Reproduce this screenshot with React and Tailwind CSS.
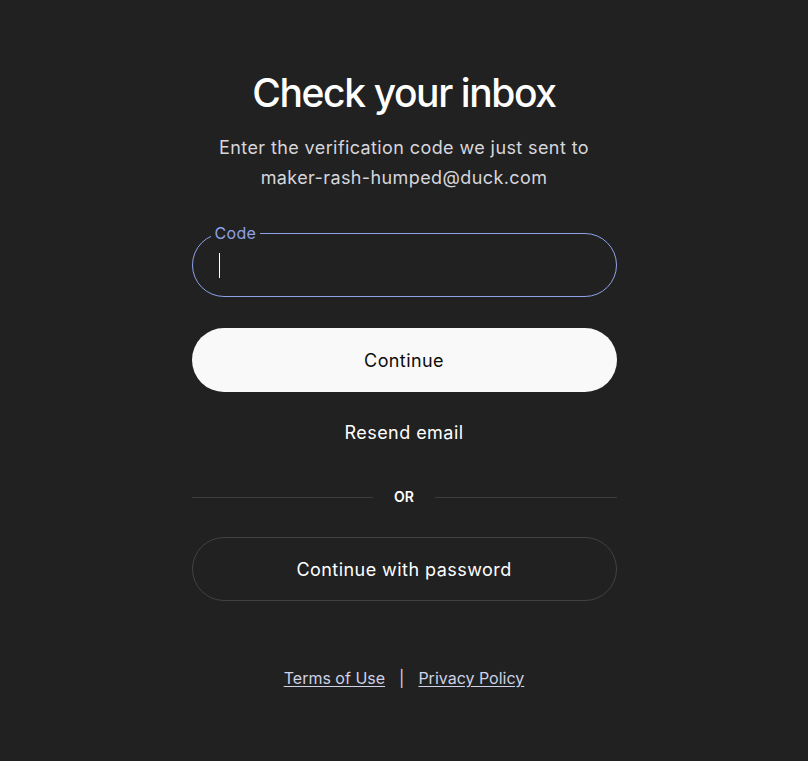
import React, { useState } from "react";

const CodeField = ({ value, onChange }) => (
  <div className="relative h-16 rounded-full border border-[#8ea2e8]">
    <span className="absolute -top-[11px] left-[18px] bg-[#212121] px-1 text-[16px] leading-5 tracking-[0.3px] text-[#8ea2e8]">
      Code
    </span>
    <div className="flex h-full items-center pl-[26px] pr-6">
      {/* caret while the field is empty */}
      {value === "" && <span className="h-[25px] w-px bg-white" />}
      <input
        value={value}
        onChange={(e) => onChange(e.target.value)}
        className="h-full w-full bg-transparent text-[18px] text-white outline-none"
      />
    </div>
  </div>
);

export default function App() {
  const [code, setCode] = useState("");

  return (
    <div
      className="min-h-[761px] bg-[#212121] text-white"
      style={{ fontFamily: "Inter, 'Noto Sans', sans-serif" }}
    >
      <div className="mx-auto flex w-[425px] flex-col pt-[69px]">
        <h1 className="text-center text-[39px] font-medium leading-[48px] tracking-[-1.4px] text-white">
          Check your inbox
        </h1>
        <p className="mt-4 text-center text-[18px] leading-[30px] tracking-[0.4px] text-[#d6d6dc]">
          Enter the verification code we just sent to
          <br />
          maker-rash-humped@duck.com
        </p>

        <div className="mt-10">
          <CodeField value={code} onChange={setCode} />
        </div>

        <button className="mt-[31px] h-16 rounded-full bg-[#f9f9f9] text-[18px] tracking-[0.4px] text-[#0d0d0d]">
          Continue
        </button>

        <button className="mt-[27px] self-center text-[18px] leading-7 tracking-[0.45px] text-white">
          Resend email
        </button>

        {/* divider */}
        <div className="mt-10 flex items-center gap-[21px]">
          <div className="h-px flex-1 bg-[#3d3d3d]" />
          <span className="text-[14px] font-semibold leading-5 text-white">OR</span>
          <div className="h-px flex-1 bg-[#3d3d3d]" />
        </div>

        <button className="mt-[30px] h-16 rounded-full border border-[#424242] text-[18px] tracking-[0.45px] text-white">
          Continue with password
        </button>

        <div className="mt-[65px] flex items-center justify-center gap-[14px] text-[16px] leading-6 text-[#cfd1e6]">
          <a href="#" className="underline underline-offset-2">
            Terms of Use
          </a>
          <span className="text-[#cfd1e6]">|</span>
          <a href="#" className="underline underline-offset-2">
            Privacy Policy
          </a>
        </div>
      </div>
    </div>
  );
}
